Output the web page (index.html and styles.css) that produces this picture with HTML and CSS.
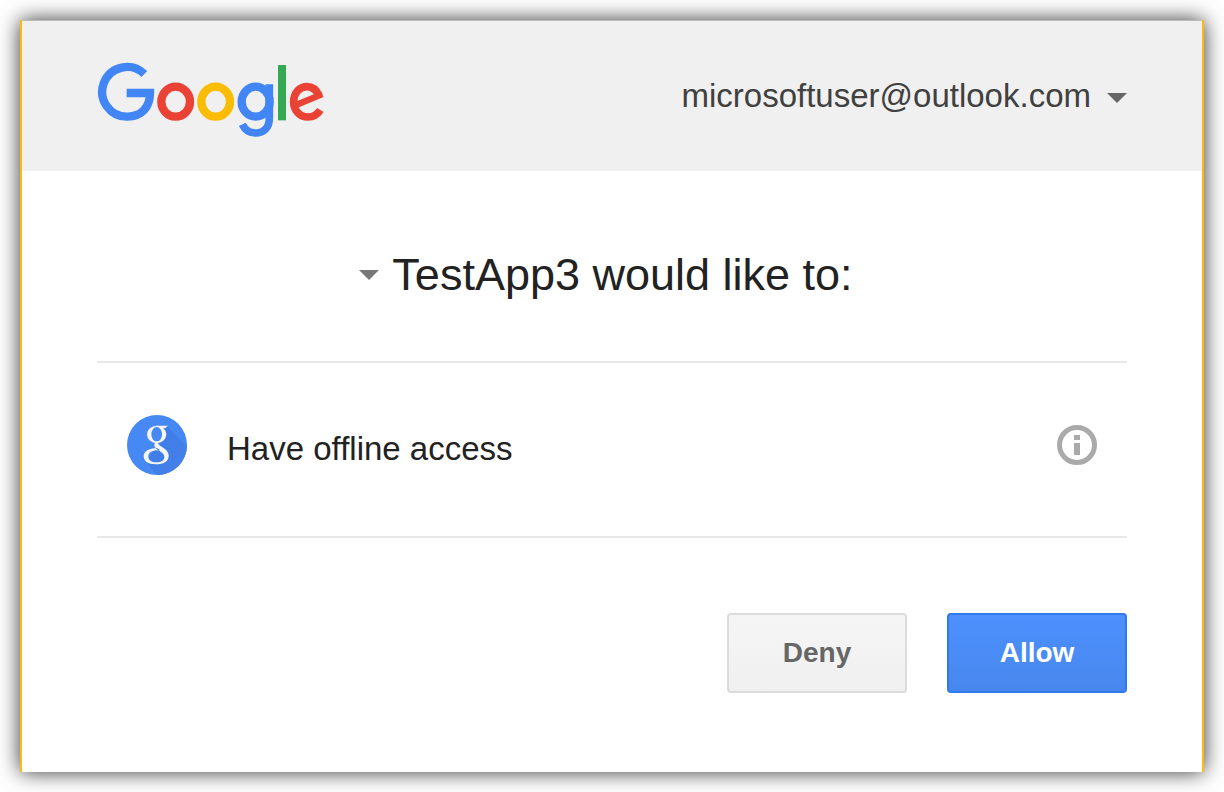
FILE: index.html
```html
<!DOCTYPE html>
<html lang="en">
<head>
<meta charset="utf-8">
<meta name="viewport" content="width=device-width, initial-scale=1">
<title>Request for permission</title>
<link rel="stylesheet" href="styles.css">
</head>
<body>
<div class="card">
  <header class="header">
    <svg class="logo" viewBox="21 36 684 228" role="img" aria-label="Google" fill="none" stroke-width="25">
      <path stroke="#4285f4" d="M163 72A74.5 74.5 0 1 0 113 200C154 200 180 172 180 129H110"/>
      <ellipse stroke="#ea4335" cx="257" cy="155" rx="43" ry="45"/>
      <ellipse stroke="#fbbc05" cx="377" cy="155" rx="43" ry="45"/>
      <ellipse stroke="#4285f4" cx="497" cy="155" rx="42" ry="45"/>
      <path stroke="#4285f4" stroke-width="23" d="M538 103V204C538 235 520 249 497 249C478 249 465 240 457 223"/>
      <rect fill="#34a853" x="564" y="45" width="24" height="166"/>
      <path stroke="#ea4335" stroke-width="23" d="M691 180C682 194 670 201 654 201C629 201 611 181 611 155C611 129 629 110 651 110C669 110 680 121 687 137"/>
      <path stroke="#ea4335" stroke-width="19" d="M697 132.500L618 165"/>
    </svg>
    <button class="account" type="button">
      <span>microsoftuser@outlook.com</span>
      <svg class="arrow arrow-dark" viewBox="0 0 20 10" aria-hidden="true"><path d="M0 0H20L10 10Z"/></svg>
    </button>
  </header>
  <main class="content">
    <h1 class="title">
      <svg class="arrow" viewBox="0 0 20 10" aria-hidden="true"><path d="M0 0H20L10 10Z"/></svg>
      <span>TestApp3 would like to:</span>
    </h1>
    <ul class="scopes">
      <li class="scope">
        <svg class="badge" viewBox="0 0 180 180" aria-hidden="true">
          <defs>
            <clipPath id="disc"><circle cx="90" cy="90" r="90"/></clipPath>
            <linearGradient id="shade" x1="0" y1="0" x2="1" y2="1"><stop offset="0" stop-color="#3f7ce6"/><stop offset="1" stop-color="#4481ea"/></linearGradient>
          </defs>
          <circle cx="90" cy="90" r="90" fill="#4688f4"/>
          <path clip-path="url(#disc)" fill="url(#shade)" d="M120 34L190 104V190H98L58 142L90 90Z"/>
          <g fill="#f5f5f5" fill-rule="evenodd">
            <path d="M60 58a29 26 0 1 0 58 0a29 26 0 1 0-58 0ZM73 58a16 22 0 1 0 32 0a16 22 0 1 0-32 0Z"/>
            <path d="M86 32H123L115 39H101Z"/>
            <path d="M50 124C50 108 66 100 90 99L100 106C76 104 64 112 64 124C64 136 74 142 88 142C103 142 112 136 112 126C112 116 103 111 92 104C81 97 79 88 87 79H96C91 85 94 89 102 94C114 102 125 109 125 122C125 139 110 148 86 148C63 148 50 139 50 124Z"/>
          </g>
        </svg>
        <span class="scope-name">Have offline access</span>
        <button class="info" type="button" aria-label="More information">
          <svg viewBox="0 0 40 40" aria-hidden="true">
            <circle cx="20" cy="20" r="17.5" fill="none" stroke="#aaa" stroke-width="5"/>
            <path fill="#aaa" d="M17 10h6v5h-6zM17 18h6v12h-6z"/>
          </svg>
        </button>
      </li>
    </ul>
    <div class="actions">
      <button class="button deny" type="button">Deny</button>
      <button class="button allow" type="button">Allow</button>
    </div>
  </main>
</div>
</body>
</html>
```
FILE: styles.css
```css
* {
  box-sizing: border-box;
}

body {
  margin: 0;
  padding: 20px;
  background: #fff;
  color: #222;
  font-family: "Liberation Sans", Arial, sans-serif;
}

button {
  font-family: inherit;
  cursor: pointer;
}

.card {
  border: solid #fdb813;
  border-width: 0 2px;
  background: #fff;
  box-shadow: 0 0 20px rgba(0, 0, 0, 0.8);
}

.header {
  display: flex;
  align-items: center;
  justify-content: space-between;
  padding: 41px 75px 33px;
  border-top: 1px solid #bbb;
  background: #f0f0f0;
}

.logo {
  width: 228px;
  height: 76px;
}

.account {
  display: flex;
  align-items: center;
  gap: 16px;
  padding: 0 0 8px;
  border: 0;
  background: none;
  color: #404040;
  font-size: 33px;
  line-height: 40px;
}

.arrow {
  flex: none;
  width: 20px;
  height: 10px;
  fill: #777;
}

.arrow-dark {
  margin-top: 4px;
  fill: #666;
}

.content {
  padding: 76px 75px 79px;
}

.title {
  display: flex;
  align-items: center;
  justify-content: center;
  gap: 13px;
  margin: 0;
  padding-right: 12px;
  font-size: 45px;
  font-weight: 400;
  line-height: 56px;
}

.scopes {
  margin: 58px 0 75px;
  padding: 0;
  list-style: none;
}

.scope {
  display: flex;
  align-items: center;
  padding: 52px 30px 61px;
  border: solid #e8e8e8;
  border-width: 2px 0;
}

.badge {
  width: 60px;
  height: 60px;
}

.scope-name {
  flex: 1;
  padding: 8px 0 0 40px;
  font-size: 33px;
  line-height: 40px;
}

.info {
  display: flex;
  padding: 0;
  border: 0;
  background: none;
}

.info svg {
  width: 40px;
  height: 40px;
}

.actions {
  display: flex;
  justify-content: flex-end;
  gap: 40px;
}

.button {
  width: 180px;
  height: 80px;
  border: 2px solid;
  border-radius: 4px;
  font-size: 28px;
  font-weight: 700;
}

.deny {
  border-color: #dcdcdc;
  background: linear-gradient(#f5f5f5, #f0f0f0);
  color: #666;
}

.allow {
  border-color: #3079ed;
  background: linear-gradient(#4d90fe, #4787ed);
  color: #fff;
}
```
